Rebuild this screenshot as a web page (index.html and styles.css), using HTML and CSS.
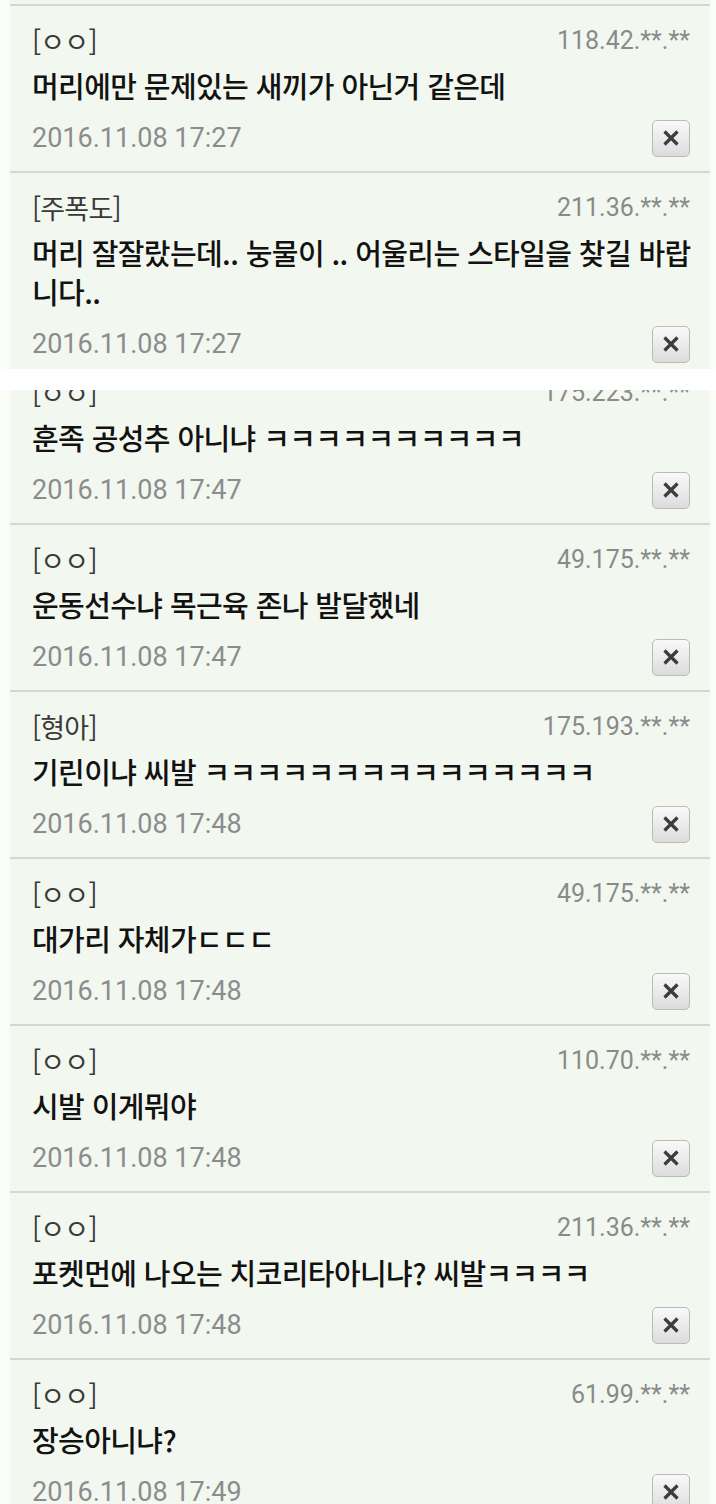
FILE: index.html
```html
<!DOCTYPE html>
<html lang="ko">
<head>
<meta charset="utf-8">
<title>댓글</title>
<link rel="stylesheet" href="styles.css">
</head>
<body>
<div class="shot shot-top">
  <div class="list">
    <div class="card">
      <div class="head"><span class="name">[ㅇㅇ]</span><span class="ip">118.42.**.**</span></div>
      <p class="text">머리에만 문제있는 새끼가 아닌거 같은데</p>
      <div class="foot"><span class="date">2016.11.08 17:27</span><button class="del" type="button"><svg viewBox="0 0 16 16" width="16" height="16"><path d="M1.5 1.5L14.5 14.5M14.5 1.5L1.5 14.5"/></svg></button></div>
    </div>
    <div class="card">
      <div class="head"><span class="name">[주폭도]</span><span class="ip">211.36.**.**</span></div>
      <p class="text">머리 잘잘랐는데.. 눙물이 .. 어울리는 스타일을 찾길 바랍니다..</p>
      <div class="foot"><span class="date">2016.11.08 17:27</span><button class="del" type="button"><svg viewBox="0 0 16 16" width="16" height="16"><path d="M1.5 1.5L14.5 14.5M14.5 1.5L1.5 14.5"/></svg></button></div>
    </div>
  </div>
</div>
<div class="gap"></div>
<div class="shot shot-bottom">
  <div class="list">
    <div class="card">
      <div class="head"><span class="name">[ㅇㅇ]</span><span class="ip">175.223.**.**</span></div>
      <p class="text">훈족 공성추 아니냐 ㅋㅋㅋㅋㅋㅋㅋㅋㅋㅋ</p>
      <div class="foot"><span class="date">2016.11.08 17:47</span><button class="del" type="button"><svg viewBox="0 0 16 16" width="16" height="16"><path d="M1.5 1.5L14.5 14.5M14.5 1.5L1.5 14.5"/></svg></button></div>
    </div>
    <div class="card">
      <div class="head"><span class="name">[ㅇㅇ]</span><span class="ip">49.175.**.**</span></div>
      <p class="text">운동선수냐 목근육 존나 발달했네</p>
      <div class="foot"><span class="date">2016.11.08 17:47</span><button class="del" type="button"><svg viewBox="0 0 16 16" width="16" height="16"><path d="M1.5 1.5L14.5 14.5M14.5 1.5L1.5 14.5"/></svg></button></div>
    </div>
    <div class="card">
      <div class="head"><span class="name">[형아]</span><span class="ip">175.193.**.**</span></div>
      <p class="text">기린이냐 씨발 ㅋㅋㅋㅋㅋㅋㅋㅋㅋㅋㅋㅋㅋㅋㅋ</p>
      <div class="foot"><span class="date">2016.11.08 17:48</span><button class="del" type="button"><svg viewBox="0 0 16 16" width="16" height="16"><path d="M1.5 1.5L14.5 14.5M14.5 1.5L1.5 14.5"/></svg></button></div>
    </div>
    <div class="card">
      <div class="head"><span class="name">[ㅇㅇ]</span><span class="ip">49.175.**.**</span></div>
      <p class="text">대가리 자체가ㄷㄷㄷ</p>
      <div class="foot"><span class="date">2016.11.08 17:48</span><button class="del" type="button"><svg viewBox="0 0 16 16" width="16" height="16"><path d="M1.5 1.5L14.5 14.5M14.5 1.5L1.5 14.5"/></svg></button></div>
    </div>
    <div class="card">
      <div class="head"><span class="name">[ㅇㅇ]</span><span class="ip">110.70.**.**</span></div>
      <p class="text">시발 이게뭐야</p>
      <div class="foot"><span class="date">2016.11.08 17:48</span><button class="del" type="button"><svg viewBox="0 0 16 16" width="16" height="16"><path d="M1.5 1.5L14.5 14.5M14.5 1.5L1.5 14.5"/></svg></button></div>
    </div>
    <div class="card">
      <div class="head"><span class="name">[ㅇㅇ]</span><span class="ip">211.36.**.**</span></div>
      <p class="text">포켓먼에 나오는 치코리타아니냐? 씨발ㅋㅋㅋㅋ</p>
      <div class="foot"><span class="date">2016.11.08 17:48</span><button class="del" type="button"><svg viewBox="0 0 16 16" width="16" height="16"><path d="M1.5 1.5L14.5 14.5M14.5 1.5L1.5 14.5"/></svg></button></div>
    </div>
    <div class="card">
      <div class="head"><span class="name">[ㅇㅇ]</span><span class="ip">61.99.**.**</span></div>
      <p class="text">장승아니냐?</p>
      <div class="foot"><span class="date">2016.11.08 17:49</span><button class="del" type="button"><svg viewBox="0 0 16 16" width="16" height="16"><path d="M1.5 1.5L14.5 14.5M14.5 1.5L1.5 14.5"/></svg></button></div>
    </div>
  </div>
</div>
</body>
</html>
```
FILE: styles.css
```css
html, body {
  margin: 0;
  padding: 0;
}
body {
  background: #fafcf8;
  font-family: "Noto Sans CJK KR", "Noto Sans", sans-serif;
  color: #111;
}
.shot {
  overflow: hidden;
}
.shot-top {
  height: 369px;
}
.shot-top .list {
  padding-top: 4px;
}
.gap {
  height: 21px;
  background: #ffffff;
}
.shot-bottom .list {
  margin-top: -34px;
}
.list {
  margin: 0 6px 0 10px;
  background: #f2f8ef;
}
.card {
  border-top: 2px solid #d2d9cf;
  padding: 14px 20px 13px 22px;
}
.head {
  display: flex;
  justify-content: space-between;
  align-items: center;
  height: 40px;
}
.name {
  font-size: 27px;
  color: #3a3a3a;
  letter-spacing: -0.8px;
}
.ip {
  font-family: Roboto, "Liberation Sans", sans-serif;
  font-size: 25px;
  color: #8a8a8a;
}
.text {
  margin: 6px -20px 0 0;
  font-size: 29px;
  font-weight: 500;
  line-height: 39px;
  letter-spacing: -0.6px;
  color: #121212;
}
.foot {
  display: flex;
  justify-content: space-between;
  align-items: center;
  height: 40px;
  margin-top: 13px;
}
.date {
  font-family: Roboto, "Liberation Sans", sans-serif;
  font-size: 27px;
  color: #8c8c8c;
}
.del {
  width: 38px;
  height: 37px;
  box-sizing: border-box;
  padding: 0;
  border: 1px solid #b8bbb6;
  border-radius: 5px;
  background: linear-gradient(#f9f9f9, #dcdcdc);
  display: flex;
  align-items: center;
  justify-content: center;
}
.del svg path {
  fill: none;
  stroke: #3c3c3c;
  stroke-width: 3.2;
  stroke-linecap: butt;
}
```
